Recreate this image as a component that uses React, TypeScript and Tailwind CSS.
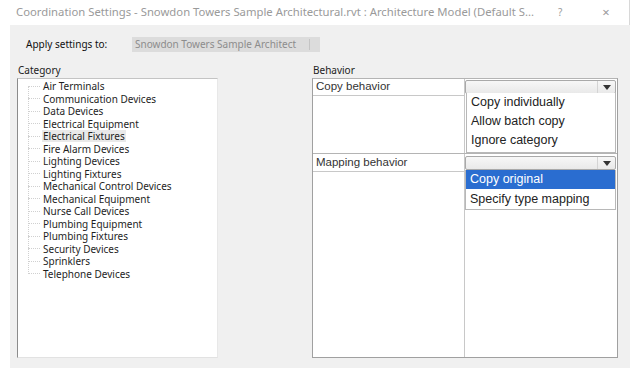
import React from 'react';

const categories = [
  'Air Terminals',
  'Communication Devices',
  'Data Devices',
  'Electrical Equipment',
  'Electrical Fixtures',
  'Fire Alarm Devices',
  'Lighting Devices',
  'Lighting Fixtures',
  'Mechanical Control Devices',
  'Mechanical Equipment',
  'Nurse Call Devices',
  'Plumbing Equipment',
  'Plumbing Fixtures',
  'Security Devices',
  'Sprinklers',
  'Telephone Devices',
];

const ui = { fontFamily: '"Noto Sans", "Open Sans", sans-serif' };
const grid = { fontFamily: '"Liberation Sans", Arial, sans-serif' };

function ComboBox() {
  return (
    <div className="flex h-[14px] w-full items-stretch rounded-[2px] border border-[#a9a9a9] bg-gradient-to-b from-[#f7f7f7] to-[#e9e9e9]">
      <div className="flex-1" />
      <div className="flex w-[18px] items-center justify-center border-l border-[#d4d4d4]">
        <svg width="8" height="5" viewBox="0 0 8 5">
          <path d="M0 0h8L4 5z" fill="#333" />
        </svg>
      </div>
    </div>
  );
}

export default function App() {
  return (
    <div className="h-[371px] w-[639px] overflow-hidden bg-white" style={ui}>
      {/* Title bar */}
      <div className="flex h-[25px] items-center pl-[16px] text-[11.3px] text-[#9a9a9a]">
        <span className="w-[530px] whitespace-nowrap">
          Coordination Settings - Snowdon Towers Sample Architectural.rvt : Architecture Model (Default S...
        </span>
        <span className="ml-[12px] text-[10px]">?</span>
        <span className="ml-[40px] text-[13px] leading-none">×</span>
        <div className="ml-auto mr-[9px] h-[25px] w-px bg-[#d8d8d8]" />
      </div>

      {/* Body */}
      <div className="ml-[10px] flex h-[343px] w-[620px] flex-col bg-[#f0f0f0] pb-[10px] pt-[12px]">
        <div className="flex h-[15px] items-center pl-[16px]">
          <span className="w-[106px] text-[10px] text-[#111]">Apply settings to:</span>
          <div className="flex h-[15px] w-[188px] items-center bg-[#dcdcdc] pl-[3px] text-[10px] text-[#8c8c8c]">
            <span className="whitespace-nowrap">Snowdon Towers Sample Architect</span>
            <div className="ml-auto mr-[10px] h-[11px] w-px bg-[#c4c4c4]" />
          </div>
        </div>

        <div className="mt-[12px] flex flex-1 pl-[7px]">
          {/* Category */}
          <div className="flex w-[201px] flex-col">
            <div className="h-[12px] pl-[1px] text-[10px] leading-[12px] text-[#222]">Category</div>
            <div className="mt-[2px] flex-1 border-b border-l border-r border-t border-b-[#e2e2e2] border-l-[#8c8c8c] border-r-[#e8e8e8] border-t-[#c4c4c4] bg-white pt-[1px]">
              <div className="relative">
                <div className="absolute left-[10px] top-[6px] h-[188px] border-l border-dotted border-[#d0d0d0]" />
                {categories.map((c) => (
                  <div key={c} className="flex h-[12.5px] items-center">
                    <div className="ml-[10px] w-[12px] border-t border-dotted border-[#d0d0d0]" />
                    <span
                      className={`ml-[2px] px-[1px] text-[10px] leading-[12px] text-[#1e1e1e] ${
                        c === 'Electrical Fixtures' ? 'bg-[#e9e9e9]' : ''
                      }`}
                    >
                      {c}
                    </span>
                  </div>
                ))}
              </div>
            </div>
          </div>

          {/* Behavior */}
          <div className="ml-[94px] flex w-[306px] flex-col">
            <div className="h-[12px] pl-[1px] text-[10px] leading-[12px] text-[#222]">Behavior</div>
            <div className="mt-[2px] flex flex-1 flex-col border border-[#a0a0a0] border-t-[#b4b4b4] bg-white" style={grid}>
              <div className="flex h-[17px]">
                <div className="flex w-[152px] items-center border-b border-r border-[#c8c8c8] pl-[3px] text-[11.5px] text-[#333]">
                  Copy behavior
                </div>
                <div className="relative flex-1 pr-[1px] pt-[1px]">
                  <ComboBox />
                  <div className="absolute left-[1px] right-[1px] top-[14px] z-10 flex h-[60px] flex-col border border-t-0 border-[#b8b8b8] bg-white text-[12.5px] text-[#222]">
                    <div className="flex h-[19px] items-center pl-[4px]">Copy individually</div>
                    <div className="flex h-[19px] items-center pl-[4px]">Allow batch copy</div>
                    <div className="flex h-[19px] items-center pl-[4px]">Ignore category</div>
                  </div>
                </div>
              </div>
              <div className="flex h-[58px] border-b border-[#b4b4b4]">
                <div className="w-[152px] border-r border-[#c8c8c8]" />
                <div className="flex-1" />
              </div>
              <div className="flex h-[18px]">
                <div className="flex w-[152px] items-center border-b border-r border-[#c8c8c8] pl-[3px] pt-[1px] text-[11.5px] text-[#333]">
                  Mapping behavior
                </div>
                <div className="relative flex-1 pr-[1px] pt-[2px]">
                  <ComboBox />
                  <div className="absolute left-0 right-[1px] top-[16px] z-10 flex h-[40px] flex-col border border-t-0 border-[#b8b8b8] bg-white text-[12.5px] text-[#222]">
                    <div className="flex h-[19px] items-center bg-[#2a6dd0] pl-[4px] text-white">Copy original</div>
                    <div className="flex h-[20px] items-center pl-[4px]">Specify type mapping</div>
                  </div>
                </div>
              </div>
              <div className="flex flex-1">
                <div className="w-[152px] border-r border-[#c8c8c8]" />
                <div className="flex-1" />
              </div>
            </div>
          </div>
        </div>
      </div>
    </div>
  );
}
